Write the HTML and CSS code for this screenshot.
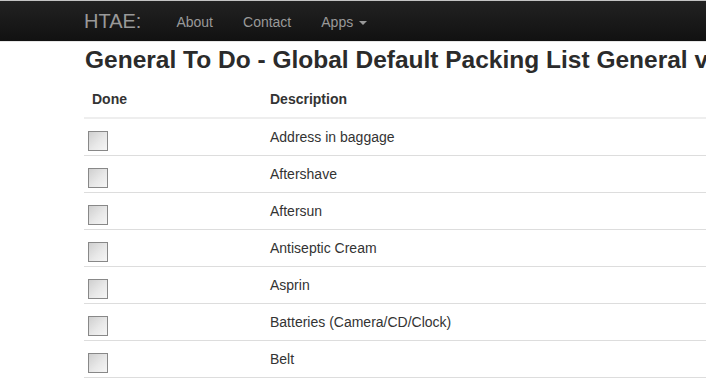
FILE: index.html
```html
<!DOCTYPE html>
<html lang="en">
<head>
    <meta charset="UTF-8">
    <title>HTAE: General To Do</title>
    <link rel="stylesheet" href="styles.css">
</head>
<body>
    <div class="navbar">
        <div class="nav-inner">
            <a class="brand" href="#">HTAE:</a>
            <a class="nav-link" href="#">About</a>
            <a class="nav-link" href="#">Contact</a>
            <a class="nav-link" href="#">Apps <span class="caret"></span></a>
        </div>
    </div>

    <div class="container">
        <h2 class="page-title">General To Do - Global Default Packing List General view</h2>
        <table class="todo-table">
            <thead>
                <tr>
                    <th class="col-done">Done</th>
                    <th>Description</th>
                </tr>
            </thead>
            <tbody>
                <tr><td><span class="check"></span></td><td>Address in baggage</td></tr>
                <tr><td><span class="check"></span></td><td>Aftershave</td></tr>
                <tr><td><span class="check"></span></td><td>Aftersun</td></tr>
                <tr><td><span class="check"></span></td><td>Antiseptic Cream</td></tr>
                <tr><td><span class="check"></span></td><td>Asprin</td></tr>
                <tr><td><span class="check"></span></td><td>Batteries (Camera/CD/Clock)</td></tr>
                <tr><td><span class="check"></span></td><td>Belt</td></tr>
            </tbody>
        </table>
    </div>
</body>
</html>
```

FILE: styles.css
```css
 body {
     margin: 0;
     font-family: "Liberation Sans", Arial, sans-serif;
     font-size: 14px;
     line-height: 20px;
     color: #333;
     background: #fff;
     overflow: hidden;
 }

 a {
     text-decoration: none;
 }

.navbar {
     height: 40px;
     border-top: 1px solid #c4c4c4;
     border-bottom: 1px solid #e6e6e6;
     background: linear-gradient(to bottom, #222 0%, #111 100%);
 }

.nav-inner {
     display: flex;
     align-items: center;
     height: 40px;
     padding-left: 84px;
 }

.brand {
     font-size: 20px;
     color: #999;
     padding-right: 20px;
     line-height: 40px;
 }

.nav-link {
     color: #999;
     padding: 0 15px;
     line-height: 40px;
     margin-top: 2px;
 }

.caret {
     display: inline-block;
     width: 0;
     height: 0;
     margin-left: 2px;
     vertical-align: middle;
     border-top: 4px solid #999;
     border-left: 4px solid transparent;
     border-right: 4px solid transparent;
 }

.container {
     padding-left: 84px;
 }

.page-title {
     margin: 3px 0 6px 1px;
     font-size: 24.5px;
     line-height: 30px;
     font-weight: bold;
     white-space: nowrap;
     color: #2b2b2b;
 }

.todo-table {
     width: 940px;
     border-collapse: collapse;
 }

.todo-table th,
.todo-table td {
     padding: 8px;
     text-align: left;
     vertical-align: top;
 }

.todo-table th {
     font-weight: bold;
     border-bottom: 2px solid #eee;
 }

.todo-table td {
     border-bottom: 1px solid #ddd;
 }

.col-done {
     width: 162px;
 }

.check {
     display: block;
     width: 18px;
     height: 18px;
     margin: 4px 0 -4px -4px;
     border: 1px solid #888;
     background: linear-gradient(135deg, #cfcfcf 0%, #e8e8e8 55%, #f6f6f6 100%);
 }
```
